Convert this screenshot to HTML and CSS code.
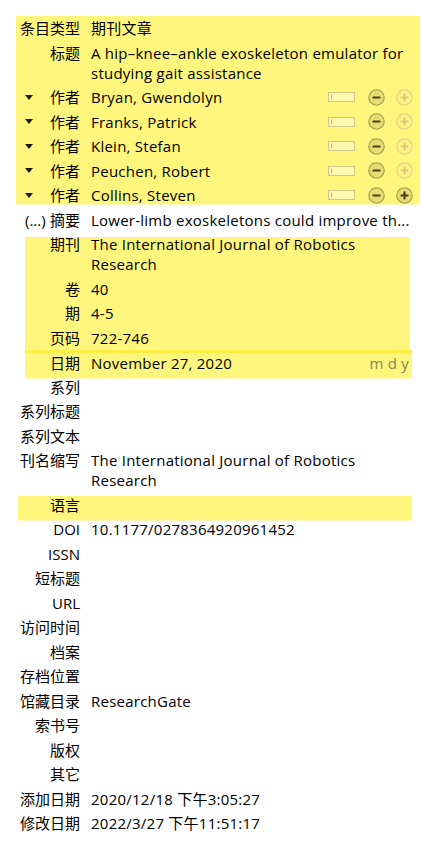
FILE: index.html
```html
<!DOCTYPE html>
<html lang="zh">
<head>
<meta charset="utf-8">
<title>条目信息</title>
<link rel="stylesheet" href="styles.css">
</head>
<body>
<div class="pane">
  <div class="group g-top">
    <div class="row"><div class="label">条目类型</div><div class="value">期刊文章</div></div>
    <div class="row"><div class="label">标题</div><div class="value">A hip–knee–ankle exoskeleton emulator for studying gait assistance</div></div>
    <div class="row author"><div class="label"><span class="tri"><svg width="8" height="5" viewBox="0 0 8 5"><polygon points="0,0 8,0 4,5" fill="#1a1a1a"/></svg></span><span class="lt">作者</span></div><div class="value"><span class="name">Bryan, Gwendolyn</span><span class="tools"><svg class="box" width="27" height="10" viewBox="0 0 27 10"><rect x="0.5" y="0.5" width="26" height="9" fill="#fffab0" stroke="#cfc888"/><line x1="3.5" y1="2.5" x2="3.5" y2="7.5" stroke="#bdb57a"/></svg><svg class="btn" width="17" height="17" viewBox="0 0 17 17"><circle cx="8.5" cy="8.5" r="7.7" fill="#e6dd72" stroke="#a39b4c" stroke-width="1.1"/><rect x="4.3" y="7.4" width="8.4" height="2.2" rx="1.1" fill="#45421e"/></svg><svg class="btn" width="17" height="17" viewBox="0 0 17 17"><circle cx="8.5" cy="8.5" r="7.7" fill="#fbf283" stroke="#dcd38a" stroke-width="1.1"/><rect x="4.5" y="7.5" width="8" height="2" rx="0.8" fill="#d6cd7a"/><rect x="7.5" y="4.5" width="2" height="8" rx="0.8" fill="#d6cd7a"/></svg></span></div></div>
    <div class="row author"><div class="label"><span class="tri"><svg width="8" height="5" viewBox="0 0 8 5"><polygon points="0,0 8,0 4,5" fill="#1a1a1a"/></svg></span><span class="lt">作者</span></div><div class="value"><span class="name">Franks, Patrick</span><span class="tools"><svg class="box" width="27" height="10" viewBox="0 0 27 10"><rect x="0.5" y="0.5" width="26" height="9" fill="#fffab0" stroke="#cfc888"/><line x1="3.5" y1="2.5" x2="3.5" y2="7.5" stroke="#bdb57a"/></svg><svg class="btn" width="17" height="17" viewBox="0 0 17 17"><circle cx="8.5" cy="8.5" r="7.7" fill="#e6dd72" stroke="#a39b4c" stroke-width="1.1"/><rect x="4.3" y="7.4" width="8.4" height="2.2" rx="1.1" fill="#45421e"/></svg><svg class="btn" width="17" height="17" viewBox="0 0 17 17"><circle cx="8.5" cy="8.5" r="7.7" fill="#fbf283" stroke="#dcd38a" stroke-width="1.1"/><rect x="4.5" y="7.5" width="8" height="2" rx="0.8" fill="#d6cd7a"/><rect x="7.5" y="4.5" width="2" height="8" rx="0.8" fill="#d6cd7a"/></svg></span></div></div>
    <div class="row author"><div class="label"><span class="tri"><svg width="8" height="5" viewBox="0 0 8 5"><polygon points="0,0 8,0 4,5" fill="#1a1a1a"/></svg></span><span class="lt">作者</span></div><div class="value"><span class="name">Klein, Stefan</span><span class="tools"><svg class="box" width="27" height="10" viewBox="0 0 27 10"><rect x="0.5" y="0.5" width="26" height="9" fill="#fffab0" stroke="#cfc888"/><line x1="3.5" y1="2.5" x2="3.5" y2="7.5" stroke="#bdb57a"/></svg><svg class="btn" width="17" height="17" viewBox="0 0 17 17"><circle cx="8.5" cy="8.5" r="7.7" fill="#e6dd72" stroke="#a39b4c" stroke-width="1.1"/><rect x="4.3" y="7.4" width="8.4" height="2.2" rx="1.1" fill="#45421e"/></svg><svg class="btn" width="17" height="17" viewBox="0 0 17 17"><circle cx="8.5" cy="8.5" r="7.7" fill="#fbf283" stroke="#dcd38a" stroke-width="1.1"/><rect x="4.5" y="7.5" width="8" height="2" rx="0.8" fill="#d6cd7a"/><rect x="7.5" y="4.5" width="2" height="8" rx="0.8" fill="#d6cd7a"/></svg></span></div></div>
    <div class="row author"><div class="label"><span class="tri"><svg width="8" height="5" viewBox="0 0 8 5"><polygon points="0,0 8,0 4,5" fill="#1a1a1a"/></svg></span><span class="lt">作者</span></div><div class="value"><span class="name">Peuchen, Robert</span><span class="tools"><svg class="box" width="27" height="10" viewBox="0 0 27 10"><rect x="0.5" y="0.5" width="26" height="9" fill="#fffab0" stroke="#cfc888"/><line x1="3.5" y1="2.5" x2="3.5" y2="7.5" stroke="#bdb57a"/></svg><svg class="btn" width="17" height="17" viewBox="0 0 17 17"><circle cx="8.5" cy="8.5" r="7.7" fill="#e6dd72" stroke="#a39b4c" stroke-width="1.1"/><rect x="4.3" y="7.4" width="8.4" height="2.2" rx="1.1" fill="#45421e"/></svg><svg class="btn" width="17" height="17" viewBox="0 0 17 17"><circle cx="8.5" cy="8.5" r="7.7" fill="#fbf283" stroke="#dcd38a" stroke-width="1.1"/><rect x="4.5" y="7.5" width="8" height="2" rx="0.8" fill="#d6cd7a"/><rect x="7.5" y="4.5" width="2" height="8" rx="0.8" fill="#d6cd7a"/></svg></span></div></div>
    <div class="row author"><div class="label"><span class="tri"><svg width="8" height="5" viewBox="0 0 8 5"><polygon points="0,0 8,0 4,5" fill="#1a1a1a"/></svg></span><span class="lt">作者</span></div><div class="value"><span class="name">Collins, Steven</span><span class="tools"><svg class="box" width="27" height="10" viewBox="0 0 27 10"><rect x="0.5" y="0.5" width="26" height="9" fill="#fffab0" stroke="#cfc888"/><line x1="3.5" y1="2.5" x2="3.5" y2="7.5" stroke="#bdb57a"/></svg><svg class="btn" width="17" height="17" viewBox="0 0 17 17"><circle cx="8.5" cy="8.5" r="7.7" fill="#e6dd72" stroke="#a39b4c" stroke-width="1.1"/><rect x="4.3" y="7.4" width="8.4" height="2.2" rx="1.1" fill="#45421e"/></svg><svg class="btn" width="17" height="17" viewBox="0 0 17 17"><circle cx="8.5" cy="8.5" r="7.7" fill="#e6dd72" stroke="#a39b4c" stroke-width="1.1"/><rect x="4.3" y="7.4" width="8.4" height="2.2" rx="1.1" fill="#45421e"/><rect x="7.4" y="4.3" width="2.2" height="8.4" rx="1.1" fill="#45421e"/></svg></span></div></div>
  </div>
  <div class="row"><div class="label"><span class="more">(...)</span><span class="lt">摘要</span></div><div class="value clip">Lower-limb exoskeletons could improve th...</div></div>
  <div class="group g-journal">
    <div class="row"><div class="label">期刊</div><div class="value">The International Journal of Robotics Research</div></div>
    <div class="row"><div class="label">卷</div><div class="value">40</div></div>
    <div class="row"><div class="label">期</div><div class="value">4-5</div></div>
    <div class="row"><div class="label">页码</div><div class="value">722-746</div></div>
  </div>
  <div class="row date"><div class="label">日期</div><div class="value split"><span>November 27, 2020</span><span class="mdy">m d y</span></div></div>
  <div class="row"><div class="label">系列</div><div class="value"></div></div>
  <div class="row"><div class="label">系列标题</div><div class="value"></div></div>
  <div class="row"><div class="label">系列文本</div><div class="value"></div></div>
  <div class="row"><div class="label">刊名缩写</div><div class="value">The International Journal of Robotics Research</div></div>
  <div class="row lang"><div class="label">语言</div><div class="value"></div></div>
  <div class="row"><div class="label">DOI</div><div class="value">10.1177/0278364920961452</div></div>
  <div class="row"><div class="label">ISSN</div><div class="value"></div></div>
  <div class="row"><div class="label">短标题</div><div class="value"></div></div>
  <div class="row"><div class="label">URL</div><div class="value"></div></div>
  <div class="row"><div class="label">访问时间</div><div class="value"></div></div>
  <div class="row"><div class="label">档案</div><div class="value"></div></div>
  <div class="row"><div class="label">存档位置</div><div class="value"></div></div>
  <div class="row"><div class="label">馆藏目录</div><div class="value">ResearchGate</div></div>
  <div class="row"><div class="label">索书号</div><div class="value"></div></div>
  <div class="row"><div class="label">版权</div><div class="value"></div></div>
  <div class="row"><div class="label">其它</div><div class="value"></div></div>
  <div class="row"><div class="label">添加日期</div><div class="value">2020/12/18 下午3:05:27</div></div>
  <div class="row"><div class="label">修改日期</div><div class="value">2022/3/27 下午11:51:17</div></div>
</div>
</body>
</html>
```

FILE: styles.css
```css
* { box-sizing: border-box; }
html, body { margin: 0; background: #ffffff; }
body {
  font-family: "Open Sans", "Noto Sans CJK SC", sans-serif;
  font-size: 15px;
  line-height: 20px;
  color: #000000;
}
.pane {
  padding: 16px 10px 20px 0;
}
.row {
  display: grid;
  grid-template-columns: var(--lw, 80px) 1fr;
  column-gap: 11px;
  padding: 2.25px 0;
  min-height: 24.5px;
}
.label {
  text-align: right;
  white-space: nowrap;
  display: flex;
  justify-content: flex-end;
  align-items: center;
  align-self: start;
  height: 20px;
}
.label .lt { margin-left: auto; }
.value { min-width: 0; letter-spacing: 0.24px; }
.clip { white-space: nowrap; overflow: hidden; }

.g-top {
  --lw: 64px;
  margin-left: 16px;
  margin-right: -8px;
  background: linear-gradient(#fff67d, #fff67d) no-repeat 0 0 / 100% calc(100% - 3.5px);
}
.g-journal {
  --lw: 55px;
  margin-left: 25px;
  margin-right: 2px;
  background: linear-gradient(#fff67d, #fff67d) no-repeat 0 5px / 100% 100%;
}
.date {
  --lw: 55px;
  margin-left: 25px;
  background: #fff67d;
  border-top: 3px solid #ffef45;
  padding-top: 0;
  padding-bottom: 1.5px;
  box-shadow: 0 3.5px 0 #fff67d;
}
.lang {
  --lw: 62px;
  margin-left: 18px;
  background: linear-gradient(#fff67d, #fff67d) no-repeat 0 3.5px / 100% 100%;
  box-shadow: 0 3.5px 0 #fff67d;
}

.author .value {
  display: flex;
  align-items: center;
  height: 20px;
}
.author .name { flex: 1; white-space: nowrap; }
.tri { display: flex; margin-left: 9px; }
.tools {
  display: flex;
  align-items: center;
  margin-right: 7px;
}
.tools .box { margin-right: 13px; }
.tools .btn + .btn { margin-left: 11px; }
.more { margin-left: 25px; }

.split {
  display: flex;
  justify-content: space-between;
  padding-right: 3px;
}
.mdy { color: #8a8656; }
```
